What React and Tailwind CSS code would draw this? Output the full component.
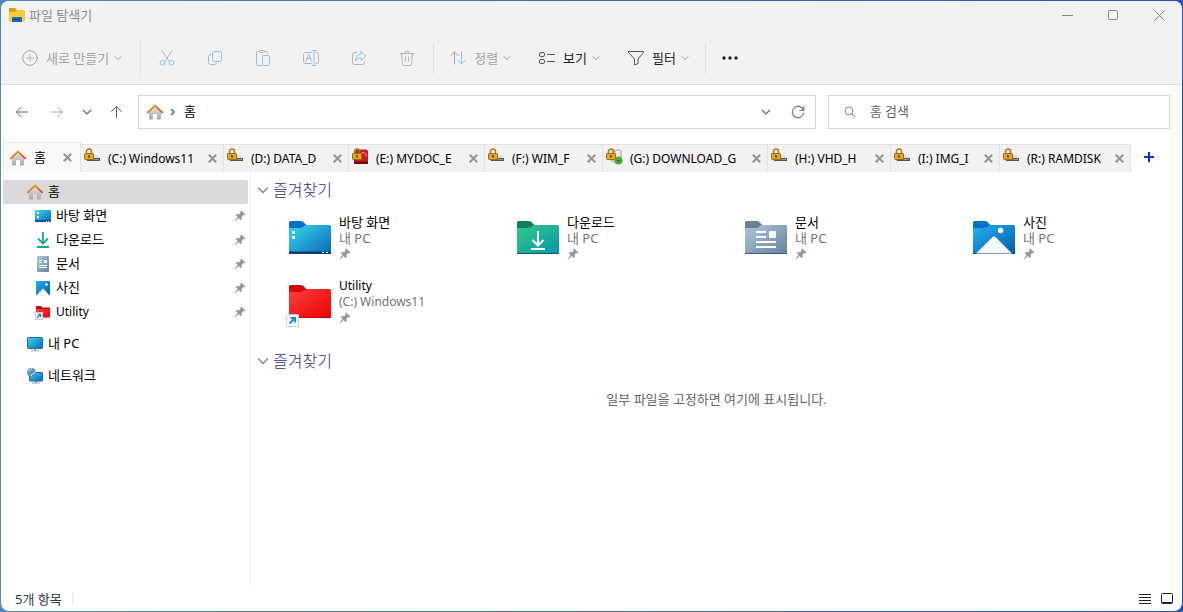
import React, { useState } from 'react';

const ChevronDown = ({ size = 8, className = '' }) => (
    <svg width={size} height={size} viewBox="0 0 10 10" fill="none" stroke="currentColor" strokeWidth="1.2" className={`shrink-0 ${className}`}>
        <path d="M1 3l4 4 4-4" />
    </svg>
);

const HomeIcon = () => (
    <svg width="16" height="16" viewBox="0 0 16 16" className="shrink-0">
        <defs>
            <linearGradient id="homeWall" x1="0" y1="0" x2="0" y2="1">
                <stop offset="0" stopColor="#e3e3e3" />
                <stop offset="1" stopColor="#a9a9a9" />
            </linearGradient>
            <linearGradient id="homeRoof" x1="0" y1="0" x2="1" y2="1">
                <stop offset="0" stopColor="#f5a01d" />
                <stop offset="1" stopColor="#d2491a" />
            </linearGradient>
        </defs>
        <path d="M8 2.5L14 8v6.4a1 1 0 0 1-1 1h-3V11a1 1 0 0 0-1-1H7a1 1 0 0 0-1 1v4.4H3a1 1 0 0 1-1-1V8z" fill="url(#homeWall)" />
        <path d="M.8 8.4L8 1.6l7.2 6.8" fill="none" stroke="url(#homeRoof)" strokeWidth="1.9" strokeLinecap="round" strokeLinejoin="round" />
    </svg>
);

const ExplorerIcon = () => (
    <svg width="16" height="16" viewBox="0 0 16 16" className="shrink-0">
        <path d="M0 2a1 1 0 0 1 1-1h5l2 2h7v3H0z" fill="#dd9f06" />
        <path d="M0 5h6l2-2h7a1 1 0 0 1 1 1v10a1 1 0 0 1-1 1H1a1 1 0 0 1-1-1z" fill="#fccb3a" />
        <path d="M3 15v-4a1 1 0 0 1 1-1h8a1 1 0 0 1 1 1v4z" fill="#0f6cc6" />
        <path d="M5 12.5h6" stroke="#08407e" />
    </svg>
);

const PinIcon = () => (
    <svg width="12" height="12" viewBox="0 0 12 12" className="shrink-0" fill="#8f999f">
        <path d="M7.2 .6L11.4 4.4 10.4 5.2 8.9 5.3 7.6 7 7.6 9.4 6.7 10.2 4.6 8.1 1.2 11.2 .6 10.8 3.6 7.1 1.6 5.1 2.4 4.3 4.8 4.3 6.5 2.9 6.4 1.4z" />
    </svg>
);

const Stroke = ({ children }) => (
    <svg width="16" height="16" viewBox="0 0 16 16" fill="none" stroke="currentColor" strokeLinecap="round" strokeLinejoin="round" className="shrink-0">
        {children}
    </svg>
);

const blue = '#8fc3ea';

const toolIcons = [
    {
        label: '잘라내기',
        icon: (
            <Stroke>
                <path d="M3 .8l7 10.4M13 .8L6 11.2" />
                <circle cx="3.5" cy="12.8" r="2.4" stroke={blue} />
                <circle cx="12.5" cy="12.8" r="2.4" stroke={blue} />
            </Stroke>
        ),
    },
    {
        label: '복사',
        icon: (
            <Stroke>
                <path d="M3.5 4.5a2 2 0 0 0-2 2v6a2 2 0 0 0 2 2h4a2 2 0 0 0 2-1.5" />
                <rect x="5.5" y="1.5" width="9" height="10" rx="2" stroke={blue} />
            </Stroke>
        ),
    },
    {
        label: '붙여넣기',
        icon: (
            <Stroke>
                <path d="M4.5 1.5h-2a1 1 0 0 0-1 1v12a1 1 0 0 0 1 1h4M9.5 1.5h2a1 1 0 0 1 1 1v1" />
                <rect x="4.5" y=".5" width="5" height="2" rx="1" />
                <rect x="7.5" y="5.5" width="7" height="10" rx="1" stroke={blue} />
            </Stroke>
        ),
    },
    {
        label: '이름 바꾸기',
        icon: (
            <Stroke>
                <path d="M8.5 2.5h-6a2 2 0 0 0-2 2v7a2 2 0 0 0 2 2h6M13 2.5h.5a2 2 0 0 1 2 2v7a2 2 0 0 1-2 2H13" />
                <path d="M9 .5h4M9 15.5h4M11 .5v15M3 11l2.8-7 2.7 7M4 8.5h3.6" stroke={blue} />
            </Stroke>
        ),
    },
    {
        label: '공유',
        icon: (
            <Stroke>
                <path d="M5.5 2.5h-2a2 2 0 0 0-2 2v8a2 2 0 0 0 2 2h8a2 2 0 0 0 2-2v-1" />
                <path d="M10 1.5l5 4.5-5 4.5V8C7 8 5.5 9 4.5 11c0-4 2-6.5 5.5-7z" stroke={blue} />
            </Stroke>
        ),
    },
    {
        label: '삭제',
        icon: (
            <Stroke>
                <path d="M1 3.5h14M5.5 3.5a2.5 2.5 0 0 1 5 0M2.5 3.5l1 10.5a1.500 1.500 0 0 0 1.500 1.500h6a1.500 1.500 0 0 0 1.500-1.500l1-10.500M6.500 7v4.500M9.500 7v4.500" />
            </Stroke>
        ),
    },
];

const Divider = ({ className = 'ml-0.5' }) => <span className={`mr-0.5 h-8 w-px bg-[#e2e2e2] ${className}`} />;

const MenuButton = ({ icon, label, disabled }) => (
    <button disabled={disabled} className={`flex h-10 items-center px-3.5 ${disabled ? 'text-[#a3a3a3]' : 'text-[#222]'}`}>
        {icon}
        <span className="ml-2 mr-[5px] whitespace-nowrap">{label}</span>
        <ChevronDown className="text-[#9a9a9a]" />
    </button>
);

const WindowBar = () => (
    <div className="flex h-[30px] items-center pb-0.5 pl-2">
        <ExplorerIcon />
        <h1 className="ml-1 flex-1 text-[#8d8d8d]">파일 탐색기</h1>
        <div className="flex text-[#858585]">
            <button aria-label="최소화" className="flex h-7 w-[46px] items-center justify-center">
                <svg width="11" height="11" viewBox="0 0 11 11" stroke="currentColor"><path d="M0 5.5h11" /></svg>
            </button>
            <button aria-label="최대화" className="flex h-7 w-[46px] items-center justify-center">
                <svg width="10" height="10" viewBox="0 0 10 10" fill="none" stroke="currentColor"><rect x=".5" y=".5" width="9" height="9" rx="1" /></svg>
            </button>
            <button aria-label="닫기" className="flex h-7 w-[46px] items-center justify-center">
                <svg width="11" height="11" viewBox="0 0 11 11" stroke="currentColor"><path d="M.5.5l10 10M10.5.5l-10 10" /></svg>
            </button>
        </div>
    </div>
);

const Toolbar = () => (
    <div className="flex h-[54px] items-center border-b border-[#dcdcdc] pl-[7px]">
        <MenuButton
            disabled
            label="새로 만들기"
            icon={
                <Stroke>
                    <circle cx="8" cy="8" r="7.3" />
                    <path d="M8 4.5v7M4.5 8h7" stroke={blue} />
                </Stroke>
            }
        />
        <Divider className="ml-1" />
        {toolIcons.map(({ label, icon }) => (
            <button key={label} aria-label={label} disabled className="flex h-10 w-12 items-center justify-center text-[#b5b5b5]">
                {icon}
            </button>
        ))}
        <Divider />
        <MenuButton
            disabled
            label="정렬"
            icon={
                <Stroke>
                    <path d="M4.5 14V2M.8 5.7L4.5 2l3.7 3.7" />
                    <path d="M11.5 2v12M7.8 10.3l3.7 3.7 3.7-3.7" stroke={blue} />
                </Stroke>
            }
        />
        <MenuButton
            label="보기"
            icon={
                <Stroke>
                    <rect x=".5" y="2.5" width="5" height="4" rx="1.5" stroke="#555" />
                    <rect x=".5" y="9.5" width="5" height="4" rx="1.5" stroke="#555" />
                    <path d="M8.5 4.5h7M8.5 11.5h7" stroke="#555" />
                </Stroke>
            }
        />
        <MenuButton
            label="필터"
            icon={
                <Stroke>
                    <path d="M.5 1.5h15v1L10 9v4.5L6.5 15V9L.5 2.5z" stroke="#555" />
                </Stroke>
            }
        />
        <Divider />
        <button aria-label="더 보기" className="flex h-10 w-11 items-center justify-center text-[#222]">
            <svg width="16" height="4" viewBox="0 0 16 4" fill="currentColor">
                <circle cx="2" cy="2" r="1.7" />
                <circle cx="8" cy="2" r="1.7" />
                <circle cx="14" cy="2" r="1.7" />
            </svg>
        </button>
    </div>
);

const AddressRow = () => (
    <div className="flex h-[54px] items-center pr-3 text-[#666]">
        <nav className="flex w-[137px] shrink-0 items-center pl-3.5">
            <button aria-label="뒤로" className="mr-[18px]">
                <Stroke><path d="M13 8H1.5M6.5 3L1.5 8l5 5" /></Stroke>
            </button>
            <button aria-label="앞으로" disabled className="mr-[17px] text-[#a8a8a8]">
                <Stroke><path d="M2 8h11.5M8.5 3l5 5-5 5" /></Stroke>
            </button>
            <button aria-label="최근 위치" className="mr-[17px]">
                <ChevronDown size={10} />
            </button>
            <button aria-label="위로">
                <Stroke><path d="M7.5 13.5V2.5M2.5 7.5l5-5 5 5" /></Stroke>
            </button>
        </nav>
        <div className="grid flex-1 grid-cols-[1.98fr_1fr] gap-3">
            <div className="flex h-[34px] items-center border border-[#d6d6d6] pl-2 pr-2.5">
                <HomeIcon />
                <svg width="8" height="8" viewBox="0 0 8 8" fill="none" stroke="currentColor" strokeWidth="1.5" className="ml-1.5 mr-[7px]"><path d="M2 1l3 3-3 3" /></svg>
                <button className="flex-1 pb-0.5 text-left text-black">홈</button>
                <button aria-label="이전 위치" className="mr-5"><ChevronDown size={10} /></button>
                <button aria-label="새로 고침">
                    <svg width="14" height="14" viewBox="0 0 14 14" fill="none" stroke="#777" strokeWidth="1.2">
                        <path d="M12.5 5.5A5.7 5.7 0 1 0 12.700 7.500M12.700 1v4.500H8.500" />
                    </svg>
                </button>
            </div>
            <label className="flex h-[34px] items-center border border-[#d6d6d6] pl-[15px]">
                <svg width="12" height="12" viewBox="0 0 12 12" fill="none" stroke="#888"><circle cx="5" cy="5" r="4" /><path d="M8 8l3.5 3.5" /></svg>
                <input type="search" aria-label="홈 검색" placeholder="홈 검색" className="ml-3.5 min-w-0 flex-1 pb-0.5 outline-none placeholder:text-[#666]" />
            </label>
        </div>
    </div>
);

const Padlock = () => (
    <>
        <path d="M2.5 6V3.500a2.500 2.500 0 0 1 5 0V6" fill="none" stroke="#a97a1c" strokeWidth="1.5" />
        <rect x=".5" y="5.500" width="9" height="6" rx=".8" fill="#e2a526" stroke="#9c6c12" />
        <path d="M5 7.200v2.300" stroke="#4b3205" strokeWidth="1.5" />
    </>
);

const DriveIcon = ({ kind }) => (
    <svg width="17" height="17" viewBox="0 0 17 17" className="mb-1 shrink-0">
        {kind === 'drive' && (
            <>
                <path d="M6 7h7.500l2.500 3H6z" fill="#dedede" />
                <path d="M2 10h14v3H3z" fill="#555" />
                <path d="M10 11.500h5" stroke="#999" />
            </>
        )}
        {kind === 'docs' && (
            <>
                <path d="M4 1.500h10.500L16 3v12H2V8z" fill="#c51f1f" />
                <path d="M9 5.500a3 3 0 0 1 5 3" stroke="#f0a0a0" fill="none" />
                <path d="M2 13.500h14V16H2z" fill="#6b1010" />
            </>
        )}
        {kind === 'download' && (
            <>
                <path d="M5 2l8-1 3 2v10l-8 2-5-3z" fill="#c6c6c6" />
                <path d="M10 3h4v6h-4z" fill="#ececec" />
                <circle cx="12.500" cy="12.500" r="4" fill="#4fae34" />
                <path d="M10.500 12h4l-2 2.500z" fill="#2b7d18" />
            </>
        )}
        <Padlock />
    </svg>
);

const tabs = [
    { label: '(C:) Windows11', kind: 'drive', width: 'w-[143px]' },
    { label: '(D:) DATA_D', kind: 'drive', width: 'w-[125px]' },
    { label: '(E:) MYDOC_E', kind: 'docs', width: 'w-[136px]' },
    { label: '(F:) WIM_F', kind: 'drive', width: 'w-[118px]' },
    { label: '(G:) DOWNLOAD_G', kind: 'download', width: 'w-[165px]' },
    { label: '(H:) VHD_H', kind: 'drive', width: 'w-[123px]' },
    { label: '(I:) IMG_I', kind: 'drive', width: 'w-[109px]' },
    { label: '(R:) RAMDISK', kind: 'drive', width: 'w-[131px]' },
];

const CloseTab = ({ label }) => (
    <button aria-label={`${label} 탭 닫기`} className="shrink-0">
        <svg width="9" height="9" viewBox="0 0 9 9" stroke="#949494" strokeWidth="2"><path d="M.8.8l7.4 7.4M8.2.8L.8 8.2" /></svg>
    </button>
);

const TabStrip = () => (
    <div className="mt-[3px] flex h-[30px] items-end pl-0.5">
        <div className="flex h-[30px] w-[78px] shrink-0 items-center border border-b-0 border-[#e5e5e5] bg-[#f9f9f9] pl-1.5 pr-2">
            <HomeIcon />
            <button className="ml-2 flex-1 pb-0.5 text-left text-black">홈</button>
            <CloseTab label="홈" />
        </div>
        {tabs.map(({ label, kind, width }) => (
            <div key={label} className={`flex h-7 shrink-0 items-center border-r border-t border-[#e2e2e2] bg-[#f2f2f2] pl-[3px] pr-1.5 ${width}`}>
                <DriveIcon kind={kind} />
                <button className="ml-[7px] flex-1 whitespace-nowrap text-left text-xs text-black">{label}</button>
                <CloseTab label={label} />
            </div>
        ))}
        <button aria-label="새 탭" className="ml-3 flex h-[30px] w-3 items-center justify-center">
            <svg width="10" height="10" viewBox="0 0 10 10" stroke="#0a2fd0" strokeWidth="2"><path d="M5 0v10M0 5h10" /></svg>
        </button>
    </div>
);

const Gradients = () => (
    <defs>
        <linearGradient id="gDesk" x1="0" y1="0" x2="1" y2="1"><stop offset="0" stopColor="#37dbe8" /><stop offset="1" stopColor="#0b64bd" /></linearGradient>
        <linearGradient id="gDown" x1="0" y1="0" x2="1" y2="1"><stop offset="0" stopColor="#35c98b" /><stop offset="1" stopColor="#0497a6" /></linearGradient>
        <linearGradient id="gDoc" x1="0" y1="0" x2="1" y2="1"><stop offset="0" stopColor="#b3c5dc" /><stop offset="1" stopColor="#64829f" /></linearGradient>
        <linearGradient id="gPic" x1="0" y1="0" x2="1" y2="1"><stop offset="0" stopColor="#26b1ee" /><stop offset="1" stopColor="#0559b0" /></linearGradient>
        <linearGradient id="gRed" x1="0" y1="0" x2="1" y2="1"><stop offset="0" stopColor="#fb4040" /><stop offset="1" stopColor="#ee0000" /></linearGradient>
    </defs>
);

const SmallIcon = ({ kind }) => (
    <svg width="16" height="16" viewBox="0 0 16 16" fill="none" className="shrink-0">
        <Gradients />
        {kind === 'desktop' && (
            <>
                <rect y="2" width="16" height="12" rx="1" fill="url(#gDesk)" />
                <path d="M0 12h16v1a1 1 0 0 1-1 1H1a1 1 0 0 1-1-1z" fill="#0b4f91" />
                <path d="M2 4h2v2H2zM2 8h2v2H2zM11 13h1v1h-1zM13 13h1v1h-1z" fill="#fff" />
            </>
        )}
        {kind === 'download' && <path d="M8 0v11M3 6.500l5 5 5-5M2 15h12" stroke="#16ac8d" strokeWidth="1.8" />}
        {kind === 'document' && (
            <>
                <rect x="2" width="12" height="16" rx="1" fill="url(#gDoc)" />
                <path d="M4 4.500h3M4 6.500h3M4 9.500h8M4 11.500h8" stroke="#fff" />
                <path d="M9 4h3v3H9z" fill="#fff" />
            </>
        )}
        {kind === 'picture' && (
            <>
                <rect x="1" y="1" width="14" height="14" rx="1" fill="url(#gPic)" />
                <path d="M2 15l5.300-6a1 1 0 0 1 1.400 0l5.300 6z" fill="#fff" />
                <circle cx="11.500" cy="4.500" r="1.300" fill="#fff" />
            </>
        )}
        {kind === 'utility' && (
            <>
                <path d="M1 3a1 1 0 0 1 1-1h4l1.500 1.500H15V7H1z" fill="#c80808" />
                <path d="M1 5h14v8.500H1z" fill="url(#gRed)" />
                <rect x=".5" y="8.500" width="7" height="7" fill="#fff" stroke="#ccc" />
                <path d="M2 14l3.500-3.500M3 10.500h2.700V13" stroke="#1c82d8" strokeWidth="1.3" />
            </>
        )}
        {kind === 'pc' && (
            <>
                <path d="M7 13h2v1.500H7zM4 14.200h8v1H4z" fill="#9aa3aa" />
                <rect x=".5" y="1.500" width="15" height="11" rx=".8" fill="url(#gDesk)" stroke="#1b6c9f" />
            </>
        )}
        {kind === 'network' && (
            <>
                <path d="M8 13h2v1.500H8zM5 14.500h8v1H5z" fill="#9aa3aa" />
                <rect x="2.500" y="4.500" width="13" height="8.500" rx=".8" fill="url(#gDesk)" stroke="#1268a8" />
                <circle cx="4.500" cy="4.500" r="4.500" fill="#5f93b8" />
                <path d="M1 3c2 0 2-2 4-2M4 8c0-3 4-2 4-4" stroke="#c9e3f2" />
            </>
        )}
    </svg>
);

const tabColors = { desktop: '#0571cc', download: '#0a7f5e', document: '#66828f', picture: '#0571cc', utility: '#d40606' };
const bodyFills = { desktop: 'url(#gDesk)', download: 'url(#gDown)', document: 'url(#gDoc)', picture: 'url(#gPic)', utility: 'url(#gRed)' };
const bottomColors = { desktop: '#0b3f72', download: '#05635c', document: '#445a70', picture: '#0a4688', utility: '#c90000' };

const FolderIcon = ({ kind }) => (
    <svg width="48" height="48" viewBox="0 0 48 48" fill="none" className="shrink-0 overflow-visible">
        <Gradients />
        <path d="M3 8.500A1.500 1.500 0 0 1 4.500 7H15q1.200 0 2 .8L20.500 11v5H3z" fill={tabColors[kind]} />
        <path d="M3 14h11q1.500 0 2.500-.8l2-1.500q.8-.7 2-.7h23A1.500 1.500 0 0 1 45 12.500v26a1.500 1.500 0 0 1-1.500 1.500h-39A1.500 1.500 0 0 1 3 38.500z" fill={bodyFills[kind]} />
        <path d="M3.500 39.500h41" stroke={bottomColors[kind]} strokeLinecap="round" />
        {kind === 'desktop' && (
            <>
                <path d="M3 37.500h42v1a1.500 1.500 0 0 1-1.500 1.500h-39A1.500 1.500 0 0 1 3 38.500z" fill="#0b3f72" />
                <path d="M6 17h3v3H6zM6 22h3v3H6zM36 38h2v1h-2zM40 38h2v1h-2z" fill="#fff" />
            </>
        )}
        {kind === 'download' && <path d="M24 17v14M18.500 26l5.500 5.500 5.500-5.500M17 35h14" stroke="#fff" strokeWidth="2" />}
        {kind === 'document' && (
            <>
                <path d="M14 18h10M14 23h10M14 28h20M14 33h20" stroke="#fff" strokeWidth="2" />
                <rect x="27" y="17" width="7" height="7" rx="1" fill="#fff" />
            </>
        )}
        {kind === 'picture' && (
            <>
                <path d="M6 39.500L22.500 23q1.500-1.500 3 0L42 39.500z" fill="#f2f8fd" />
                <circle cx="30.500" cy="16.500" r="2.700" fill="#fff" />
            </>
        )}
        {kind === 'utility' && (
            <>
                <rect x=".5" y="36.500" width="12" height="12" rx="1" fill="#fff" stroke="#c9ced3" />
                <path d="M3.500 45.500l5-5M4.500 40h4.500v4.500" stroke="#1c8be0" strokeWidth="2" />
            </>
        )}
    </svg>
);

const pinned = [
    { name: '바탕 화면', place: '내 PC', kind: 'desktop' },
    { name: '다운로드', place: '내 PC', kind: 'download' },
    { name: '문서', place: '내 PC', kind: 'document' },
    { name: '사진', place: '내 PC', kind: 'picture' },
    { name: 'Utility', place: '(C:) Windows11', kind: 'utility', latin: true },
];

const Sidebar = () => (
    <nav className="w-[250px] shrink-0 border-r border-[#f3f3f3] pl-0.5 pr-0.5 pt-2 text-black">
        <a href="#home" className="flex h-6 items-center rounded-xs bg-[#d9d9d9] pl-6">
            <HomeIcon />
            <span className="ml-[5px] pb-0.5">홈</span>
        </a>
        {pinned.map(({ name, kind, latin }) => (
            <a key={name} href={`#${kind}`} className="flex h-6 items-center pl-8 pr-0.5">
                <SmallIcon kind={kind} />
                <span className={`ml-[5px] flex-1 ${latin ? 'text-xs' : 'pb-0.5'}`}>{name}</span>
                <PinIcon />
            </a>
        ))}
        <a href="#pc" className="mt-2 flex h-6 items-center pl-6">
            <SmallIcon kind="pc" />
            <span className="ml-[5px] pb-0.5">내 PC</span>
        </a>
        <a href="#network" className="mt-2 flex h-6 items-center pl-6">
            <SmallIcon kind="network" />
            <span className="ml-[5px] pb-0.5">네트워크</span>
        </a>
    </nav>
);

const SectionHeading = ({ open, onToggle }) => (
    <h2>
        <button onClick={onToggle} aria-expanded={open} className="flex h-6 items-center text-base font-light text-[#1f3181]">
            <ChevronDown size={12} className="mr-1 text-[#888]" />
            즐겨찾기
        </button>
    </h2>
);

const Content = () => {
    const [foldersOpen, setFoldersOpen] = useState(true);
    const [filesOpen, setFilesOpen] = useState(true);

    return (
        <main className="min-w-0 flex-1 pl-1.5 pt-1.5">
            <SectionHeading open={foldersOpen} onToggle={() => setFoldersOpen(!foldersOpen)} />
            {foldersOpen && (
                <ul className="mb-[23px] mt-3 grid grid-cols-[repeat(auto-fill,148px)] gap-x-20 gap-y-4 pl-[29px]">
                    {pinned.map(({ name, place, kind, latin }) => (
                        <li key={name} className="flex">
                            <FolderIcon kind={kind} />
                            <div className={`ml-[5px] ${latin ? 'text-xs' : ''}`}>
                                <p className="leading-4 text-black">{name}</p>
                                <p className="leading-4 whitespace-nowrap text-[#737373]">{place}</p>
                                <div className="flex h-4 items-center"><PinIcon /></div>
                            </div>
                        </li>
                    ))}
                </ul>
            )}
            <SectionHeading open={filesOpen} onToggle={() => setFilesOpen(!filesOpen)} />
            {filesOpen && <p className="mt-4 pr-1.5 text-center text-[#666]">일부 파일을 고정하면 여기에 표시됩니다.</p>}
        </main>
    );
};

const StatusBar = () => (
    <footer className="flex h-6 items-center pl-3.5 pr-[9px] text-[#26384c]">
        <span>5개 항목</span>
        <span className="ml-2.5 h-3 w-px bg-[#e8e8e8]" />
        <button aria-label="자세히" className="ml-auto mr-2.5">
            <svg width="12" height="12" viewBox="0 0 12 12" stroke="#222"><path d="M0 1.5h12M0 4.5h12M0 7.5h12M0 10.5h12" /></svg>
        </button>
        <button aria-label="큰 아이콘">
            <svg width="12" height="12" viewBox="0 0 12 12" fill="none" stroke="#222"><rect x=".5" y=".5" width="11" height="10" rx="1" /><path d="M1 9.5h10" /></svg>
        </button>
    </footer>
);

const App = () => {
    return (
        <div className="flex min-h-screen flex-col bg-linear-to-r from-[#5488b8] to-[#2a52b5] p-px font-['Noto_Sans','Noto_Sans_CJK_KR',sans-serif] text-[13px] leading-5">
            <div className="flex flex-1 flex-col overflow-hidden rounded-lg bg-white">
                <header className="bg-[#f2f2f2]">
                    <WindowBar />
                    <Toolbar />
                </header>
                <AddressRow />
                <TabStrip />
                <div className="flex flex-1">
                    <Sidebar />
                    <Content />
                </div>
                <StatusBar />
            </div>
        </div>
    );
};

export default App;
